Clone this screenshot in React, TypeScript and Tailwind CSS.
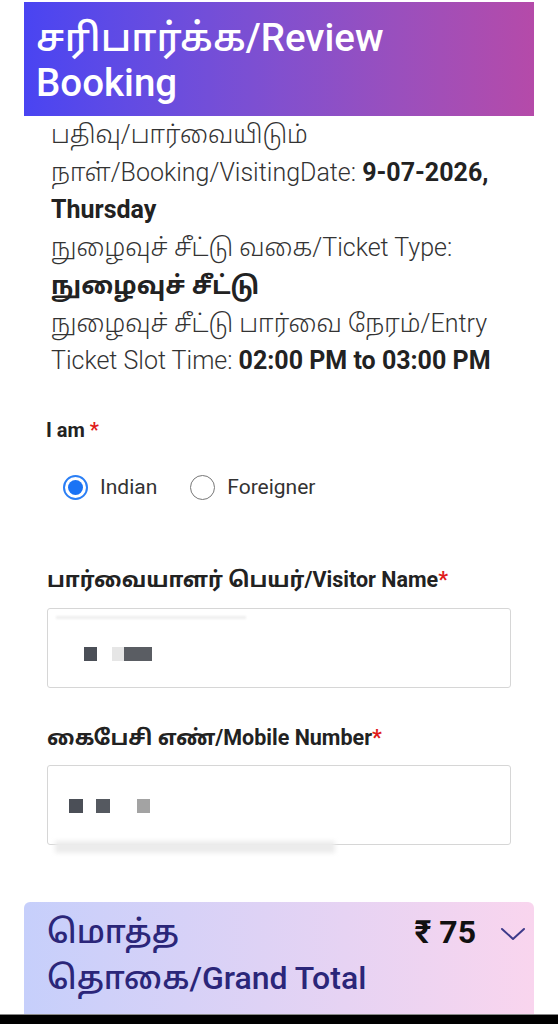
import { useState } from 'react';

const font = { fontFamily: 'Roboto, "Noto Sans", "Noto Sans Tamil", "Lohit Tamil", sans-serif' };

function Radio({ checked, label, onClick }: { checked: boolean; label: string; onClick: () => void }) {
    return (
        <label onClick={onClick} className="flex items-center cursor-pointer">
            <span
                className={
                    checked
                        ? "w-[25px] h-[25px] rounded-full border-2 border-[#2b7ff5] flex items-center justify-center"
                        : "w-[25px] h-[25px] rounded-full border-[1.5px] border-[#777777] flex items-center justify-center"
                }
            >
                {checked && <span className="w-[15px] h-[15px] rounded-full bg-[#1a73f5]"></span>}
            </span>
            <span className="ml-[12px] text-[21px] text-[#333333]">{label}</span>
        </label>
    );
}

export default function App() {
    const [nation, setNation] = useState<"IN" | "FO">("IN");

    return (
        <div style={font} className="w-[558px] h-[1024px] bg-white flex flex-col overflow-hidden">
            <div className="mx-6 mt-[2px] h-[114px] pl-3 pr-[100px] pt-[13px] bg-gradient-to-r from-[#4944f2] to-[#b54aa9]">
                <h1 className="text-white text-[38.5px] leading-[45px] font-medium">சரிபார்க்க/Review Booking</h1>
            </div>

            <div className="pl-[51px] pr-[38px] text-[25px] leading-[37.7px] font-light text-[#333333]">
                <p>
                    பதிவு/பார்வையிடும் நாள்/Booking/VisitingDate:{" "}
                    <span className="font-bold text-[#222222]">9-07-2026, Thursday</span>
                </p>
                <p>
                    நுழைவுச் சீட்டு வகை/Ticket Type:{" "}
                    <span className="font-bold text-[#222222]">நுழைவுச் சீட்டு</span>
                </p>
                <p>
                    நுழைவுச் சீட்டு பார்வை நேரம்/Entry Ticket Slot Time:{" "}
                    <span className="font-bold text-[#222222]">02:00 PM to 03:00 PM</span>
                </p>
            </div>

            <div className="pl-[46px] mt-[38px] text-[20px] leading-[24px] font-bold text-[#222222]">
                I am <span className="text-[#e01b1b]">*</span>
            </div>

            <div className="pl-[63px] mt-[32px] h-[28px] flex items-center gap-[33px]">
                <Radio checked={nation === "IN"} label="Indian" onClick={() => setNation("IN")} />
                <Radio checked={nation === "FO"} label="Foreigner" onClick={() => setNation("FO")} />
            </div>

            <div className="px-[47px] mt-[65px]">
                <label className="block text-[21.5px] leading-[26px] font-bold text-[#222222]">
                    பார்வையாளர் பெயர்/Visitor Name<span className="text-[#e01b1b]">*</span>
                </label>
                <div className="relative mt-[15px] h-[80px] border border-[#d6d6d6] rounded-[3px] bg-white">
                    <div className="absolute left-[8px] top-[7px] w-[190px] h-[3px] bg-[#eeeeee] blur-[1px]"></div>
                    <div className="absolute left-[36px] top-[38px] flex items-center">
                        <span className="w-[13px] h-[14px] bg-[#4b4f57]"></span>
                        <span className="ml-[15px] w-[12px] h-[14px] bg-[#e6e6e6]"></span>
                        <span className="w-[28px] h-[14px] bg-[#5a5d63]"></span>
                    </div>
                </div>

                <label className="block mt-[37px] text-[21.5px] leading-[26px] font-bold text-[#222222]">
                    கைபேசி எண்/Mobile Number<span className="text-[#e01b1b]">*</span>
                </label>
                <div className="relative mt-[14px] h-[80px] border border-[#d6d6d6] rounded-[3px] bg-white">
                    <div className="absolute left-[21px] top-[33px] flex items-center">
                        <span className="w-[14px] h-[14px] bg-[#4b4f57]"></span>
                        <span className="ml-[13px] w-[14px] h-[14px] bg-[#555960]"></span>
                        <span className="ml-[27px] w-[13px] h-[14px] bg-[#a3a3a3]"></span>
                    </div>
                </div>
                <div className="ml-[8px] mt-[-4px] w-[280px] h-[12px] bg-[#ececec] blur-[2px]"></div>
            </div>

            <div className="mx-6 mt-[49px] h-[112px] rounded-t-[6px] bg-gradient-to-r from-[#c6cffb] to-[#f9d5ee] pl-[23px] pr-[8px] pt-[7px] flex justify-between">
                <div className="text-[32px] leading-[46px] font-medium text-[#2b2679]">
                    <div>மொத்த</div>
                    <div>தொகை/Grand Total</div>
                </div>
                <div className="flex items-start h-[46px]">
                    <span className="text-[32px] leading-[46px] font-bold text-[#111111]">₹ 75</span>
                    <svg className="ml-[24px] mt-[16px]" width="26" height="18" viewBox="0 0 26 18" fill="none">
                        <path d="M2 4 L13 14 L24 4" stroke="#3d3a8a" strokeWidth="2" strokeLinecap="round" strokeLinejoin="round" />
                    </svg>
                </div>
            </div>

            <div className="h-[10px] bg-black border-t border-[#888888]"></div>
        </div>
    );
}
